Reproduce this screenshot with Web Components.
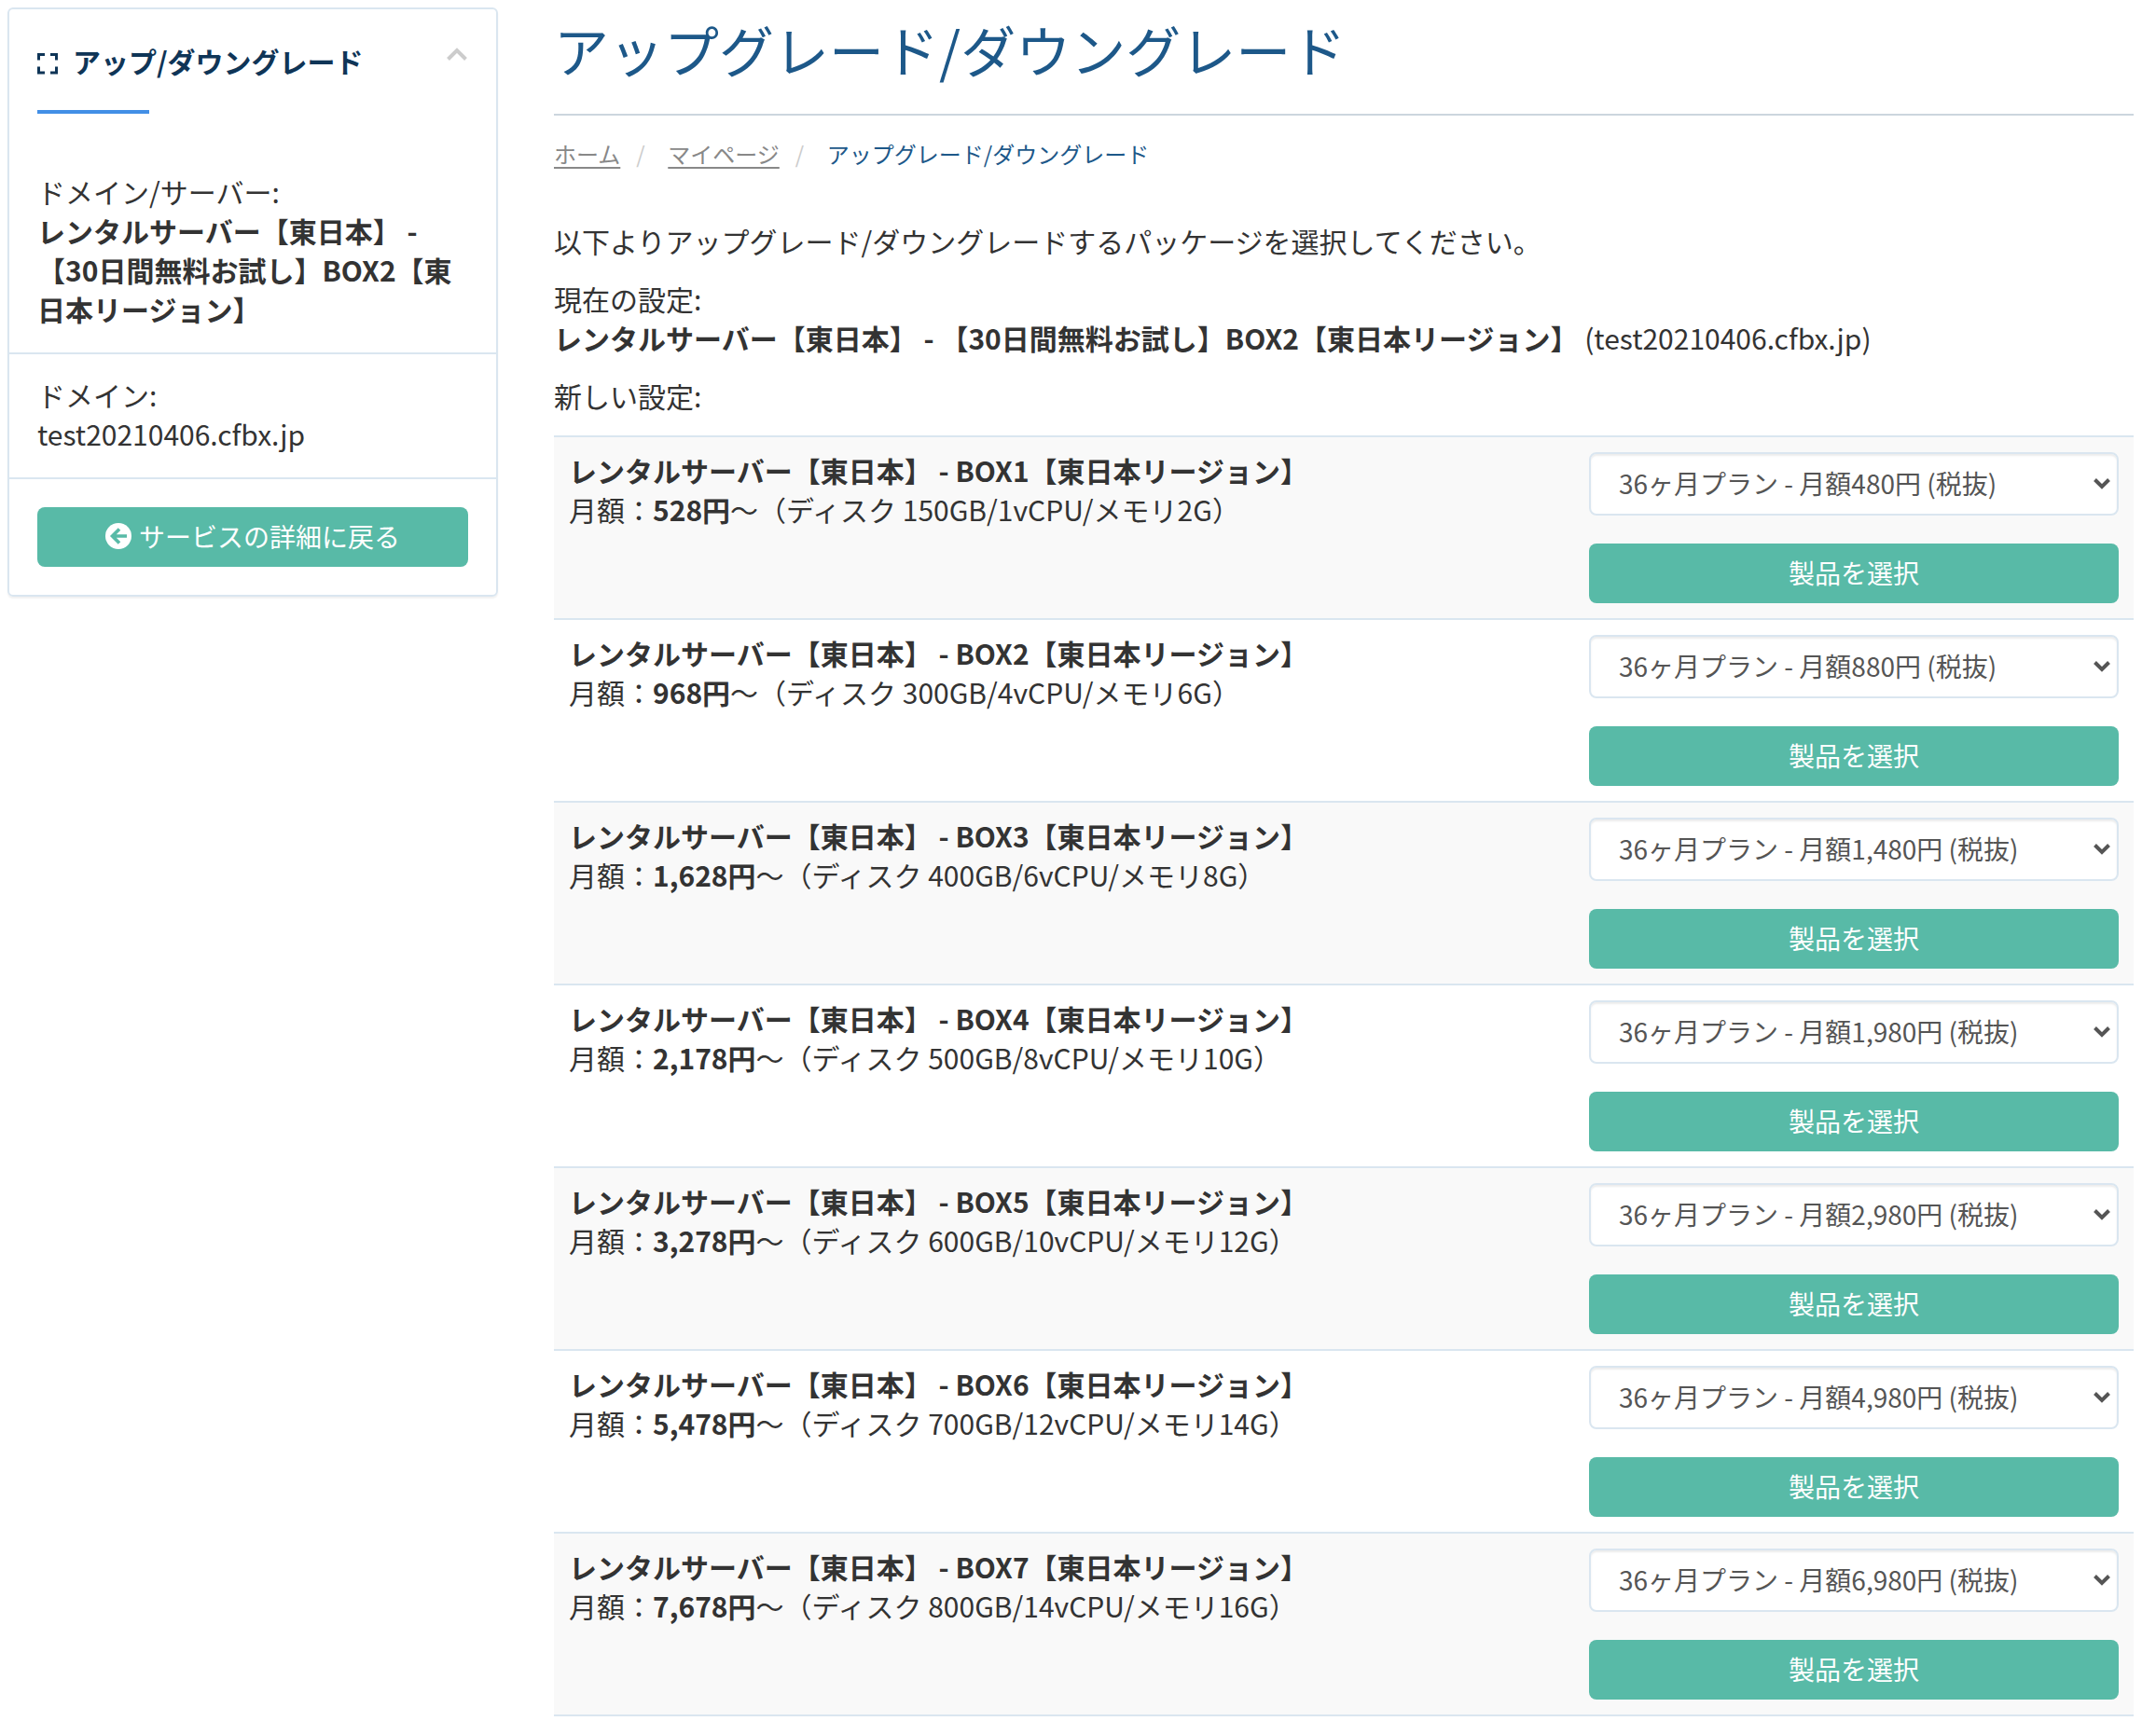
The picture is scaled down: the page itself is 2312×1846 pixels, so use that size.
<!DOCTYPE html>
<html lang="ja">
<head>
<meta charset="utf-8">
<meta name="viewport" content="width=device-width, initial-scale=1">
<title>アップグレード/ダウングレード</title>
<style>
  body {
    margin: 0;
    background: #fff;
    color: #333;
    font: 30px/42px "Noto Sans CJK JP", sans-serif;
    --line: #dae6f0;
    --accent: #58baa7;
    --navy: #0f3557;
    --blue: #1d5889;
  }
</style>
</head>
<body>
<upgrade-page>
  <side-panel slot="side" heading="アップ/ダウングレード">
    <side-item label="ドメイン/サーバー:"><b>レンタルサーバー【東日本】 - 【30日間無料お試し】BOX2【東日本リージョン】</b></side-item>
    <side-item label="ドメイン:">test20210406.cfbx.jp</side-item>
    <action-button slot="footer" icon="back">サービスの詳細に戻る</action-button>
  </side-panel>
  <page-header>アップグレード/ダウングレード</page-header>
  <bread-crumb current="アップグレード/ダウングレード">
    <a href="#home">ホーム</a>
    <a href="#mypage">マイページ</a>
  </bread-crumb>
  <setting-text>以下よりアップグレード/ダウングレードするパッケージを選択してください。</setting-text>
  <setting-text>現在の設定:<br><b>レンタルサーバー【東日本】 - 【30日間無料お試し】BOX2【東日本リージョン】</b> (test20210406.cfbx.jp)</setting-text>
  <setting-text>新しい設定:</setting-text>
  <plan-table></plan-table>
</upgrade-page>

<script>
  const define = (name, html, setup) => {
    const template = document.createElement('template');
    template.innerHTML = html;
    customElements.define(name, class extends HTMLElement {
      constructor() {
        super();
        this.attachShadow({ mode: 'open' }).append(template.content.cloneNode(true));
      }
      connectedCallback() {
        if (setup && !this.ready) { this.ready = true; setup(this, this.shadowRoot); }
      }
    });
  };

  define('upgrade-page', `
    <style>
      :host { display: grid; grid-template-columns: 526px minmax(0, 1fr); column-gap: 60px;
              align-items: start; padding: 8px 24px 4px 8px; }
      main { display: flex; flex-direction: column; min-width: 0; }
    </style>
    <slot name="side"></slot>
    <main><slot></slot></main>`);

  define('side-panel', `
    <style>
      :host { display: block; border: 2px solid var(--line); border-radius: 6px;
              box-shadow: 0 2px 2px rgba(0, 0, 0, .06); }
      header { display: flex; align-items: center; padding: 34px 30px 32px; position: relative; }
      header::after { content: ""; position: absolute; left: 30px; bottom: 0; width: 120px; height: 4px;
                      margin-bottom: -4px; background: #428fe6; }
      .frame { width: 22px; height: 24px; margin: 6px 16px 0 0; color: var(--navy); }
      h2 { flex: 1; margin: 0; font-size: 30px; line-height: 42px; font-weight: 700; color: var(--navy); }
      button { display: flex; padding: 0; border: 0; background: none; color: #ccc; margin-bottom: 14px; }
      .items { padding-top: 44px; }
      footer { padding: 30px; }
    </style>
    <header>
      <svg class="frame" viewBox="0 0 22 24" fill="none" stroke="currentColor" stroke-width="3" aria-hidden="true">
        <path d="M1.5 8.500V2.500H8M14 2.500H20.500V8.500M20.500 15.500V22H14M8 22H1.500V15.500"/>
      </svg>
      <h2></h2>
      <button type="button" aria-label="閉じる">
        <svg width="24" height="16" viewBox="0 0 24 16" fill="none" stroke="currentColor" stroke-width="4"><path d="M2.500 13.500 12 4 21.500 13.500"/></svg>
      </button>
    </header>
    <div class="items"><slot></slot></div>
    <footer><slot name="footer"></slot></footer>`,
    (host, root) => { root.querySelector('h2').textContent = host.getAttribute('heading'); });

  define('side-item', `
    <style>
      :host { display: block; padding: 22px 30px 26px; border-bottom: 2px solid var(--line); }
      span { display: block; }
    </style>
    <span></span><slot></slot>`,
    (host, root) => { root.querySelector('span').textContent = host.getAttribute('label'); });

  define('action-button', `
    <style>
      :host { display: block; }
      button { display: flex; align-items: center; justify-content: center; gap: 8px; width: 100%; height: 64px;
               padding: 0 0 2px; border: 0; border-radius: 8px; background: var(--accent); color: #fff;
               font: inherit; font-size: 28px; line-height: 40px; cursor: pointer; }
      svg { display: none; }
      :host([icon]) svg { display: block; }
    </style>
    <button type="button">
      <svg width="28" height="28" viewBox="0 0 28 28" aria-hidden="true">
        <circle cx="14" cy="14" r="14" fill="#fff"/>
        <path d="M15 6.500 7.500 14 15 21.500M8 14H23" fill="none" stroke="#58baa7" stroke-width="3.600"/>
      </svg>
      <span><slot></slot></span>
    </button>`);

  define('page-header', `
    <style>
      :host { display: block; border-bottom: 2px solid #ccd6de; padding: 12px 0 36px; }
      h1 { margin: 0; font-size: 59px; line-height: 66px; font-weight: 400; color: var(--blue); }
    </style>
    <h1><slot></slot></h1>`);

  define('bread-crumb', `
    <style>
      :host { display: block; padding: 21px 0 52px; font-size: 24px; line-height: 40px; }
      ol { display: flex; margin: 0; padding: 0; list-style: none; }
      li + li::before { content: "/"; display: inline-block; width: 12px; margin: 0 22px 0 17px; color: #ccc; }
      a { color: #888; text-decoration: underline; text-underline-offset: 4px; text-decoration-thickness: 2px; }
      .current { color: var(--blue); }
    </style>
    <nav><ol></ol></nav>`,
    (host, root) => {
      const list = root.querySelector('ol');
      for (const link of [...host.querySelectorAll('a')]) {
        const item = document.createElement('li');
        item.append(link);
        list.append(item);
      }
      const last = document.createElement('li');
      last.innerHTML = '<span class="current" aria-current="page"></span>';
      last.firstChild.textContent = host.getAttribute('current');
      list.append(last);
    });

  define('setting-text', `
    <style>:host { display: block; margin-bottom: 20px; } p { margin: 0; }</style>
    <p><slot></slot></p>`);

  define('plan-picker', `
    <style>
      :host { display: flex; flex-direction: column; gap: 30px; }
      label { display: grid; align-items: center; }
      select, svg { grid-area: 1 / 1; }
      select { appearance: none; width: 100%; height: 68px; padding: 0 30px 2px; border: 2px solid var(--line);
               border-radius: 8px; background: #fff; color: #555; font: inherit; font-size: 28px; line-height: 40px;
               box-shadow: inset 0 2px 2px rgba(0, 0, 0, .08); }
      svg { justify-self: end; margin-right: 9px; pointer-events: none; }
    </style>
    <label>
      <select aria-label="お支払いプラン"><option></option></select>
      <svg width="18" height="12" viewBox="0 0 18 12" fill="none" stroke="#555" stroke-width="4" aria-hidden="true"><path d="M1.500 1.500 9 9 16.500 1.500"/></svg>
    </label>
    <action-button>製品を選択</action-button>`,
    (host, root) => { root.querySelector('option').textContent = `36ヶ月プラン - 月額${host.getAttribute('price')}円 (税抜)`; });

  const plans = [
    ['BOX1', '528', '150GB/1vCPU/メモリ2G', '480'],
    ['BOX2', '968', '300GB/4vCPU/メモリ6G', '880'],
    ['BOX3', '1,628', '400GB/6vCPU/メモリ8G', '1,480'],
    ['BOX4', '2,178', '500GB/8vCPU/メモリ10G', '1,980'],
    ['BOX5', '3,278', '600GB/10vCPU/メモリ12G', '2,980'],
    ['BOX6', '5,478', '700GB/12vCPU/メモリ14G', '4,980'],
    ['BOX7', '7,678', '800GB/14vCPU/メモリ16G', '6,980']
  ];

  define('plan-table', `
    <style>
      :host { display: block; padding-top: 2px; }
      table { width: 100%; border-spacing: 0; border-bottom: 2px solid var(--line); table-layout: fixed; }
      td { padding: 14px 16px 16px; vertical-align: top; border-top: 2px solid var(--line); }
      .pick { width: 600px; box-sizing: border-box; padding-top: 16px; }
      tr:nth-child(odd) td { background: #f9f9f9; }
    </style>
    <table><tbody></tbody></table>`,
    (host, root) => {
      root.querySelector('tbody').innerHTML = plans.map(([name, cost, spec, price]) => `
        <tr>
          <td><strong>レンタルサーバー【東日本】 - ${name}【東日本リージョン】</strong><br>月額：<strong>${cost}円</strong>〜（ディスク ${spec}）</td>
          <td class="pick"><plan-picker price="${price}"></plan-picker></td>
        </tr>`).join('');
    });
</script>
</body>
</html>
